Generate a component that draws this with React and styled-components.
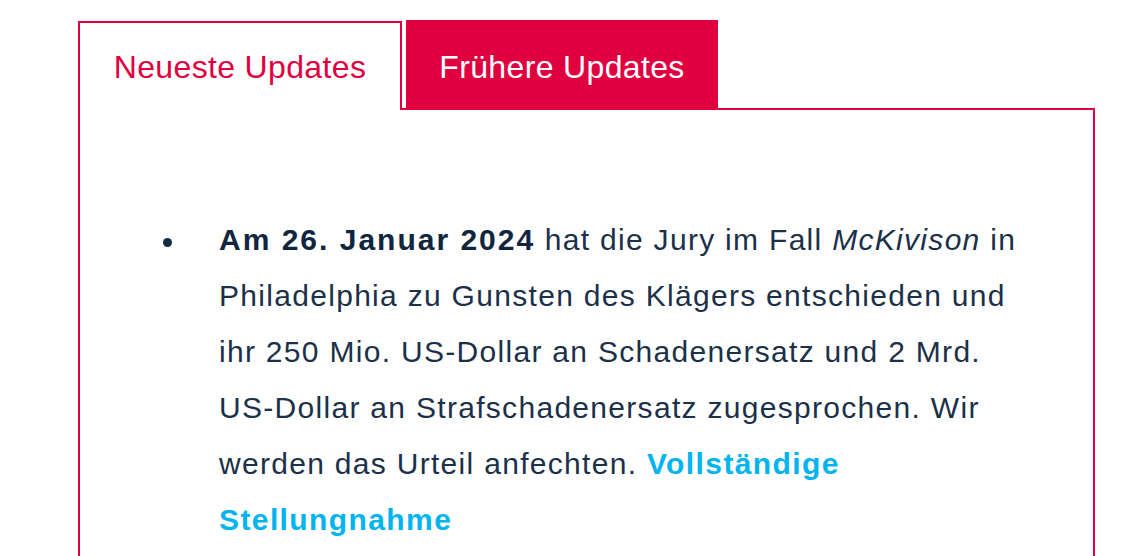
import React from "react";
import styled, { createGlobalStyle } from "styled-components";

const RED = "#e1003f";

const Global = createGlobalStyle`
  html, body { margin: 0; padding: 0; background: #fff; }
  body { font-family: "Liberation Sans", Arial, Helvetica, sans-serif; }
`;

const Page = styled.div`
  padding: 20px 0 0 78px;
`;

const TabRow = styled.div`
  display: flex;
  align-items: flex-end;
  gap: 4px;
  margin-bottom: -2px;
  position: relative;
  z-index: 1;
`;

const Tab = styled.button`
  box-sizing: border-box;
  display: flex;
  align-items: flex-start;
  justify-content: center;
  padding: ${(p) => (p.$active ? 26 : 29)}px 0 0;
  font-family: inherit;
  font-size: 32px;
  line-height: 37px;
  font-weight: 400;
  letter-spacing: 0.35px;
  cursor: pointer;
  width: ${(p) => p.$w}px;
  height: ${(p) => (p.$active ? 89 : 88)}px;
  margin-bottom: ${(p) => (p.$active ? 0 : 2)}px;
  border: ${(p) => (p.$active ? `2px solid ${RED}` : "none")};
  border-bottom: none;
  background: ${(p) => (p.$active ? "#fff" : RED)};
  color: ${(p) => (p.$active ? RED : "#fff")};
`;

const Panel = styled.div`
  box-sizing: border-box;
  width: 1017px;
  height: 460px;
  border: 2px solid ${RED};
  border-bottom: none;
  padding: 102px 0 0 83px;
`;

const Item = styled.div`
  display: flex;
  align-items: flex-start;
`;

const Bullet = styled.span`
  flex: none;
  width: 9px;
  height: 9px;
  border-radius: 50%;
  background: #142a43;
  margin: 26px 47px 0 0;
`;

const Text = styled.p`
  margin: 0;
  width: 825px;
  font-size: 30px;
  line-height: 56px;
  letter-spacing: 1.3px;
  color: #1b3049;
`;

const Strong = styled.strong`
  font-weight: 700;
  letter-spacing: 2px;
  color: #10263f;
`;

const Link = styled.a`
  font-weight: 700;
  letter-spacing: 1.4px;
  color: #00b4f0;
  text-decoration: none;
`;

export default function App() {
  return (
    <>
      <Global />
      <Page>
        <TabRow>
          <Tab $active $w={324}>Neueste Updates</Tab>
          <Tab $w={312}>Frühere Updates</Tab>
        </TabRow>
        <Panel>
          <Item>
            <Bullet />
            <Text>
              <Strong>Am 26. Januar 2024</Strong> hat die Jury im Fall{" "}
              <em>McKivison</em> in Philadelphia zu Gunsten des Klägers
              entschieden und ihr 250 Mio. US-Dollar an Schadenersatz und 2
              Mrd. US-Dollar an Strafschadenersatz zugesprochen. Wir werden das
              Urteil anfechten. <Link href="#">Vollständige Stellungnahme</Link>
            </Text>
          </Item>
        </Panel>
      </Page>
    </>
  );
}
